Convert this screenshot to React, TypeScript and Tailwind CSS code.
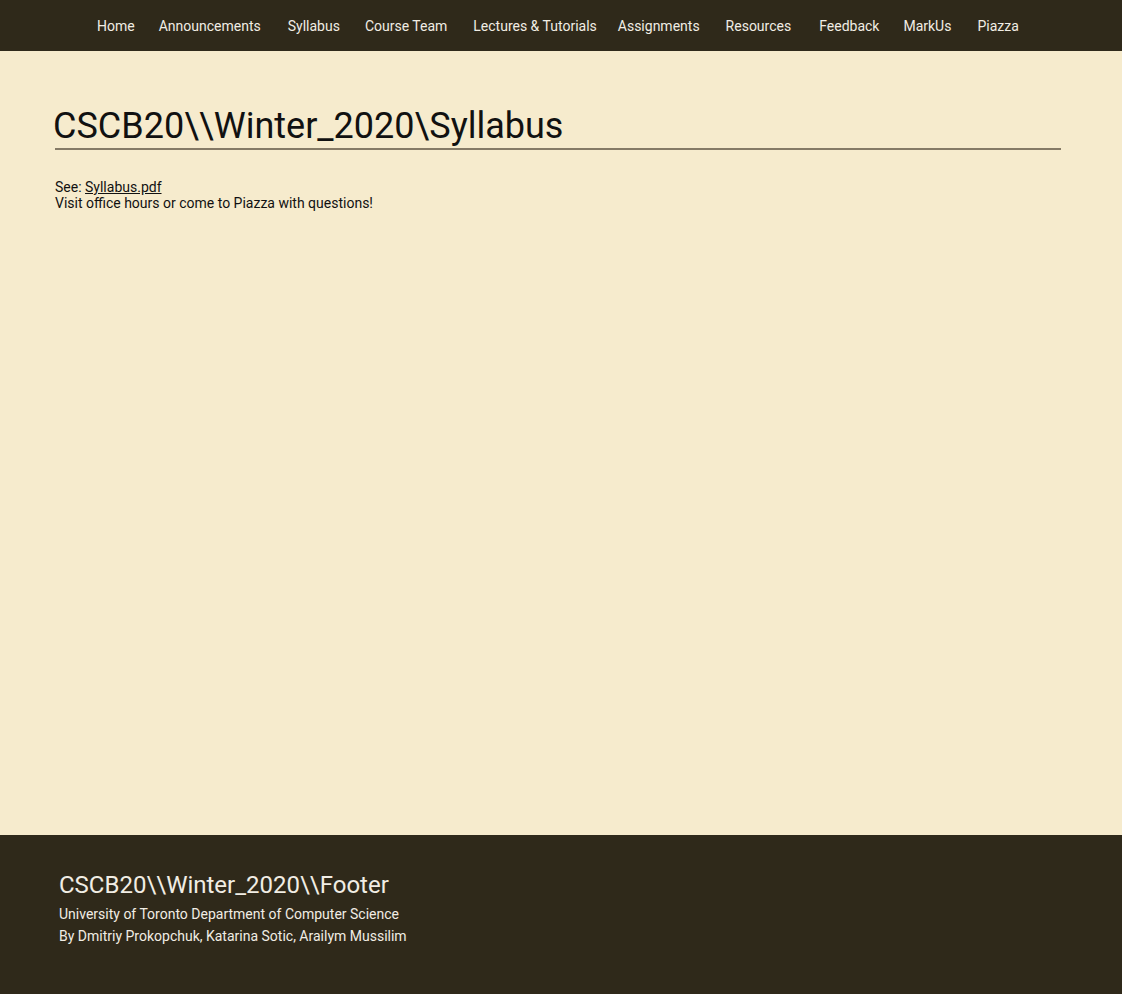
const navItems = [
  { label: 'Home', cls: '' },
  { label: 'Announcements', cls: 'ml-[24px]' },
  { label: 'Syllabus', cls: 'ml-[27px]' },
  { label: 'Course Team', cls: 'ml-[25px]' },
  { label: 'Lectures & Tutorials', cls: 'ml-[26px]' },
  { label: 'Assignments', cls: 'ml-[21px]' },
  { label: 'Resources', cls: 'ml-[26px]' },
  { label: 'Feedback', cls: 'ml-[28px]' },
  { label: 'MarkUs', cls: 'ml-[24px]' },
  { label: 'Piazza', cls: 'ml-[26px]' },
];

export default function App() {
  return (
    <div className="min-h-screen flex flex-col bg-[#f6ebcd] font-['Roboto',sans-serif]">
      <nav className="h-[51px] bg-[#2f291a] flex items-center pl-[97px] pt-[2px] text-[14px] text-[#f1ede4]">
        {navItems.map((item) => (
          <a key={item.label} href="#" className={`${item.cls} hover:text-white`}>
            {item.label}
          </a>
        ))}
      </nav>

      <main className="flex-1 pt-[54px]">
        <h1 className="pl-[53px] text-[36px] leading-[43px] text-[#111] font-normal">
          CSCB20\\Winter_2020\Syllabus
        </h1>
        <div className="ml-[55px] mr-[61px] h-[2px] bg-[#857a66]" />
        <div className="pl-[55px] pt-[29px] text-[14px] leading-[16px] text-[#111]">
          <p>
            See: <a href="#" className="underline">Syllabus.pdf</a>
          </p>
          <p>Visit office hours or come to Piazza with questions!</p>
        </div>
      </main>

      <footer className="h-[159px] bg-[#2f291a] pl-[59px] pt-[34px] text-[#f1ede4]">
        <h2 className="text-[24px] leading-[32px]">CSCB20\\Winter_2020\\Footer</h2>
        <p className="text-[14px] leading-[22px] mt-[2px]">University of Toronto Department of Computer Science</p>
        <p className="text-[14px] leading-[22px]">By Dmitriy Prokopchuk, Katarina Sotic, Arailym Mussilim</p>
      </footer>
    </div>
  );
}
